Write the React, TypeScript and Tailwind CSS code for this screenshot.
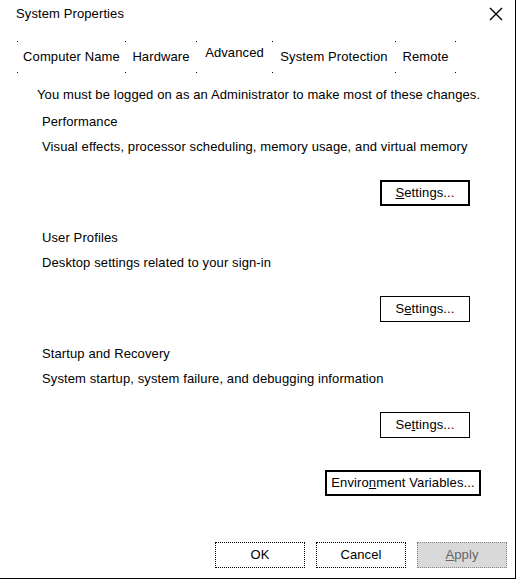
import React from "react";

const font = { fontFamily: '"Liberation Sans", Arial, sans-serif' };

function Sep() {
  return (
    <div className="flex h-[32px] w-[1px] flex-col justify-between">
      <div className="h-[1px] w-[1px] bg-black" />
      <div className="h-[1px] w-[1px] bg-black" />
    </div>
  );
}

function Btn({
  children,
  w = "w-[90px]",
  variant = "solid",
}: {
  children: React.ReactNode;
  w?: string;
  variant?: "solid" | "thick" | "dotted" | "disabled";
}) {
  const cls =
    variant === "thick"
      ? "border-2 border-black text-black"
      : variant === "dotted"
      ? "border border-dotted border-black text-black"
      : variant === "disabled"
      ? "border border-dotted border-[#888] bg-[#d9d9d9] text-[#666]"
      : "border border-black text-black";
  return (
    <div className={`${w} ${cls} flex h-[26px] items-center justify-center text-[13px]`}>
      {children}
    </div>
  );
}

export default function App() {
  return (
    <div className="h-[588px] w-[525px] bg-white tracking-[0.11px] text-black" style={font}>
      <div className="flex h-[579px] w-[516px] flex-col border-b border-r border-black">
        <div className="flex h-[28px] items-center justify-between pl-[16px] pr-[10px]">
          <span className="text-[13px]">System Properties</span>
          <svg width="16" height="16" viewBox="0 0 16 16" className="mr-[1px]">
            <path d="M2 2 L14 14 M14 2 L2 14" stroke="black" strokeWidth="1.4" />
          </svg>
        </div>

        <div className="mt-[13px] flex h-[32px] items-center pl-[17px] text-[13px]">
          <Sep />
          <div className="flex w-[107px] items-center justify-center">Computer Name</div>
          <Sep />
          <div className="flex w-[70px] items-center justify-center">Hardware</div>
          <Sep />
          <div className="flex w-[75px] -translate-y-[4px] items-center justify-center">Advanced</div>
          <Sep />
          <div className="flex w-[122px] items-center justify-center">System Protection</div>
          <Sep />
          <div className="flex w-[59px] items-center justify-center">Remote</div>
          <Sep />
        </div>

        <div className="mt-[14px] h-[16px] pl-[37px] text-[13px] leading-[16px]">
          You must be logged on as an Administrator to make most of these changes.
        </div>

        <div className="mt-[11px] h-[16px] pl-[42px] text-[13px] leading-[16px]">Performance</div>
        <div className="mt-[9px] h-[16px] pl-[42px] text-[13px] leading-[16px]">
          Visual effects, processor scheduling, memory usage, and virtual memory
        </div>
        <div className="mt-[25px] flex justify-end pr-[45px]">
          <Btn variant="thick">
            <span>
              <span className="underline">S</span>ettings...
            </span>
          </Btn>
        </div>

        <div className="mt-[24px] h-[16px] pl-[42px] text-[13px] leading-[16px]">User Profiles</div>
        <div className="mt-[9px] h-[16px] pl-[42px] text-[13px] leading-[16px]">
          Desktop settings related to your sign-in
        </div>
        <div className="mt-[25px] flex justify-end pr-[45px]">
          <Btn>
            <span>
              S<span className="underline">e</span>ttings...
            </span>
          </Btn>
        </div>

        <div className="mt-[24px] h-[16px] pl-[42px] text-[13px] leading-[16px]">Startup and Recovery</div>
        <div className="mt-[9px] h-[16px] pl-[42px] text-[13px] leading-[16px]">
          System startup, system failure, and debugging information
        </div>
        <div className="mt-[25px] flex justify-end pr-[45px]">
          <Btn>
            <span>
              Se<span className="underline">t</span>tings...
            </span>
          </Btn>
        </div>

        <div className="mt-[32px] flex justify-end pr-[34px]">
          <Btn w="w-[156px]" variant="thick">
            <span>
              Enviro<span className="underline">n</span>ment Variables...
            </span>
          </Btn>
        </div>

        <div className="mt-[46px] flex justify-end gap-[11px] pr-[8px]">
          <Btn variant="dotted">OK</Btn>
          <Btn variant="dotted">Cancel</Btn>
          <Btn variant="disabled">
            <span>
              <span className="underline">A</span>pply
            </span>
          </Btn>
        </div>
      </div>
    </div>
  );
}
